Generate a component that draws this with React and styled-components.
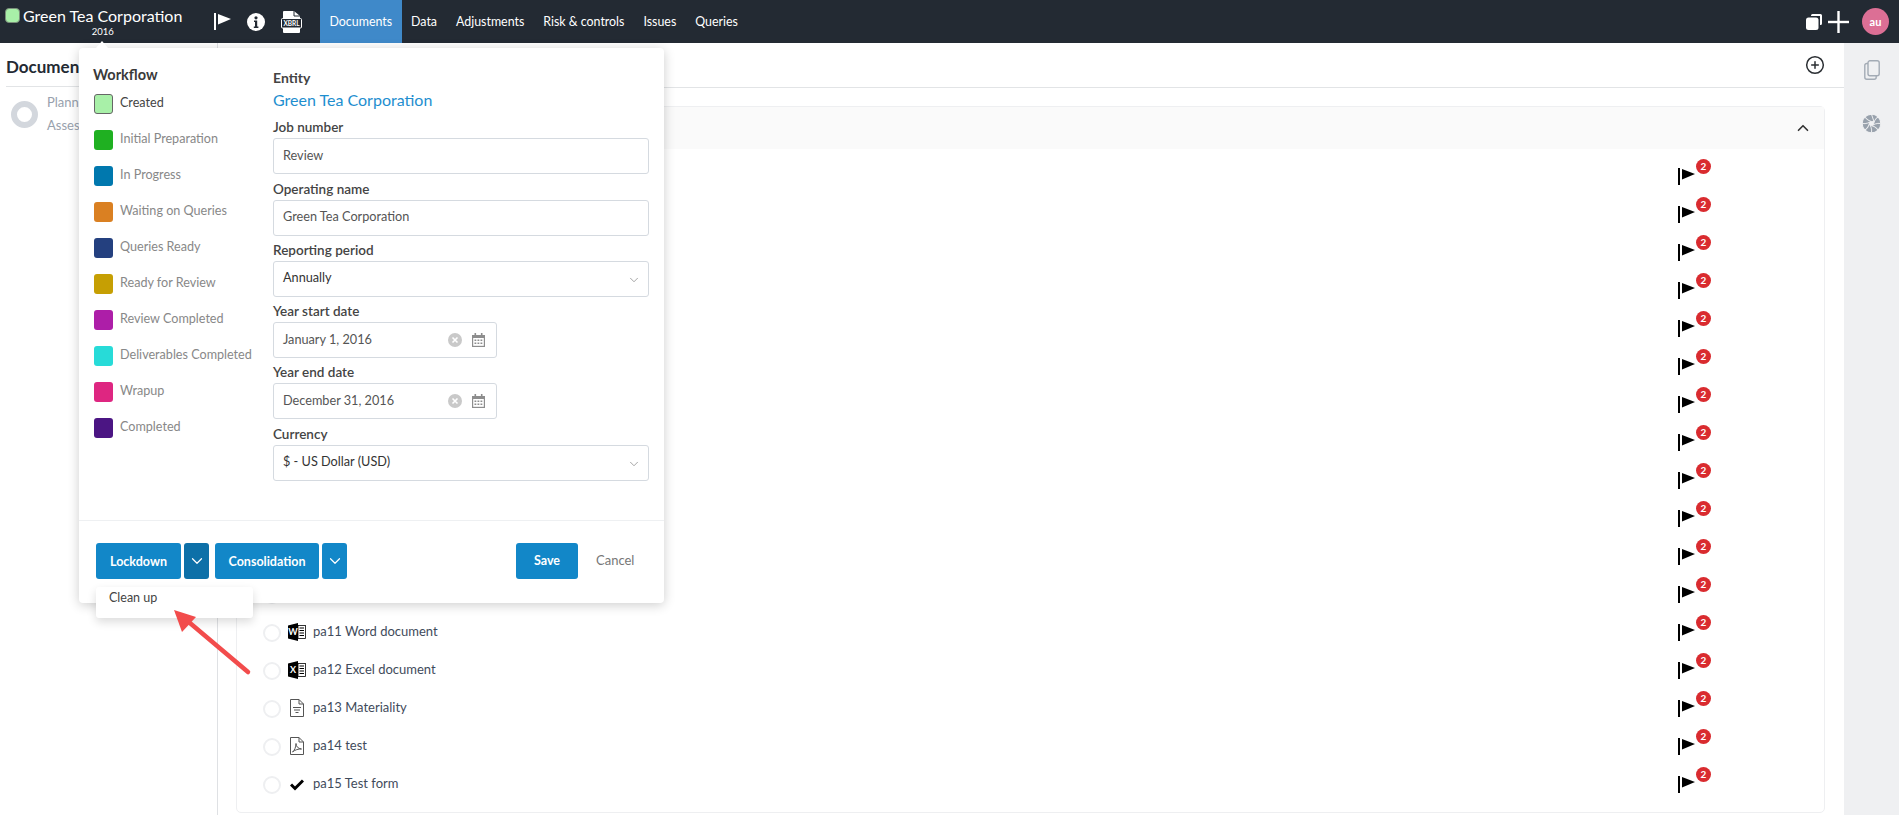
import React from 'react';
import styled, { createGlobalStyle } from 'styled-components';
import { CirclePlus, ChevronUp, ChevronDown } from 'lucide-react';

const GlobalStyle = createGlobalStyle`
    * { box-sizing: border-box; }
    html, body { margin: 0; padding: 0; height: 100%; }
    body {
        font-family: Lato, "Open Sans", sans-serif;
        background: #fff;
        color: #333;
        overflow: hidden;
    }
`;

const navItems = ['Documents', 'Data', 'Adjustments', 'Risk & controls', 'Issues', 'Queries'];

const statuses = [
    { name: 'Created', color: '#a8f0a8', active: true },
    { name: 'Initial Preparation', color: '#1fb021' },
    { name: 'In Progress', color: '#0078ae' },
    { name: 'Waiting on Queries', color: '#da8022' },
    { name: 'Queries Ready', color: '#24407f' },
    { name: 'Ready for Review', color: '#c69f03' },
    { name: 'Review Completed', color: '#ad1ea8' },
    { name: 'Deliverables Completed', color: '#27dbd8' },
    { name: 'Wrapup', color: '#de2681' },
    { name: 'Completed', color: '#4b1583' },
];

// the first rows sit behind the popup, only their flags show
const documents = [
    ...Array.from({ length: 12 }, () => ({})),
    { name: 'pa11 Word document', kind: 'word' },
    { name: 'pa12 Excel document', kind: 'excel' },
    { name: 'pa13 Materiality', kind: 'sheet' },
    { name: 'pa14 test', kind: 'pdf' },
    { name: 'pa15 Test form', kind: 'form' },
];

const FlagIcon = ({ color = '#000' }) => (
    <svg width="17" height="17" viewBox="0 0 17 17">
        <rect x="0" y="0" width="2" height="17" fill={color} />
        <path d="M4 1 L17 6 L4 11.5 Z" fill={color} />
    </svg>
);

const InfoIcon = () => (
    <svg width="18" height="18" viewBox="0 0 18 18">
        <circle cx="9" cy="9" r="9" fill="#fff" />
        <circle cx="9" cy="4.8" r="1.6" fill="#232a33" />
        <path d="M7 7.5h3.2v6h1.2v1.4H6.8v-1.4H8v-4.6H7z" fill="#232a33" />
    </svg>
);

const XbrlIcon = () => (
    <svg width="21" height="22" viewBox="0 0 21 22">
        <path d="M2 1a1 1 0 0 1 1-1h10l6 5v16a1 1 0 0 1-1 1H3a1 1 0 0 1-1-1z" fill="#fff" />
        <path d="M13 0v5h6" fill="none" stroke="#232a33" strokeWidth="1" />
        <rect x="0.5" y="7.500" width="20" height="9.500" rx="1" fill="#232a33" stroke="#fff" strokeWidth="1" />
        <text x="10.5" y="15" textAnchor="middle" fontSize="6.500" fontWeight="700" fontFamily="Lato, sans-serif" fill="#fff">XBRL</text>
    </svg>
);

const WindowsIcon = () => (
    <svg width="16" height="16" viewBox="0 0 16 16">
        <path d="M5 1.5A1.5 1.5 0 0 1 6.5 0h8A1.5 1.5 0 0 1 16 1.5v8a1.5 1.5 0 0 1-1.5 1.5H14V2H5z" fill="#fff" />
        <rect x="0" y="3.5" width="12.5" height="12.5" rx="2.5" fill="#fff" />
    </svg>
);

const ThinPlus = () => (
    <svg width="21" height="22" viewBox="0 0 21 22">
        <rect x="9.3" y="0" width="2.4" height="22" fill="#fff" />
        <rect x="0" y="9.8" width="21" height="2.4" fill="#fff" />
    </svg>
);

const CopyIcon = () => (
    <svg width="16" height="20" viewBox="0 0 16 20" fill="none" stroke="#a3abb5" strokeWidth="1.4">
        <rect x="4" y="0.8" width="11.2" height="15" rx="2" />
        <path d="M4 3.5H2.8a2 2 0 0 0-2 2v11.7a2 2 0 0 0 2 2h7.4a2 2 0 0 0 2-2V15.800" />
    </svg>
);

const ApertureIcon = () => (
    <svg width="19" height="19" viewBox="-10 -10 20 20">
        {[0, 45, 90, 135, 180, 225, 270, 315].map((angle) => (
            <path
                key={angle}
                d="M0 -9.800 A9.800 9.800 0 0 1 6.900 -6.900 C5.800 -4.800 4.600 -2 3.200 0.500 C1 -2 -0.800 -5.500 0 -9.800 Z"
                fill="#98a1ac"
                stroke="#eff0f2"
                strokeWidth="1"
                transform={`rotate(${angle})`}
            />
        ))}
    </svg>
);

const OfficeIcon = ({ letter }) => (
    <svg width="18" height="18" viewBox="0 0 18 18">
        <path d="M0 2.500 L10 0 V18 L0 15.500 Z" fill="#000" />
        <rect x="10" y="2.500" width="7.400" height="13" fill="#fff" stroke="#000" strokeWidth="0.8" />
        {[4.500, 7, 9.500, 12].map((y) => (
            <rect key={y} x="11.500" y={y} width="4.500" height="1" fill="#000" />
        ))}
        <text x="5" y="12" textAnchor="middle" fontSize="9" fontWeight="700" fontFamily="Lato, sans-serif" fill="#fff">{letter}</text>
    </svg>
);

const SheetIcon = () => (
    <svg width="14" height="18" viewBox="0 0 14 18" fill="none" stroke="#555" strokeWidth="1">
        <path d="M0.500 0.500h8.500l4.500 4.500v12.500h-13z" />
        <path d="M9 0.500v4.500h4.500" />
        <path d="M3 8.500h8M4 11h6M5.500 13.500h3" />
    </svg>
);

const PdfIcon = () => (
    <svg width="14" height="18" viewBox="0 0 14 18" fill="none" stroke="#555" strokeWidth="1">
        <path d="M0.500 0.500h8.500l4.500 4.500v12.500h-13z" />
        <path d="M9 0.500v4.500h4.500" />
        <path d="M2.500 15c2-1.500 3.500-5 3.500-8.500 0 3 2 5 5.500 5.500-3-0.200-6.500 0.800-9 3z" />
    </svg>
);

const CheckIcon = () => (
    <svg width="14" height="18" viewBox="0 0 14 18">
        <path d="M1 9.500 L5 13.500 L13 5.500" fill="none" stroke="#000" strokeWidth="3" />
    </svg>
);

const DocIcon = ({ kind }) => {
    if (kind === 'word') return <OfficeIcon letter="W" />;
    if (kind === 'excel') return <OfficeIcon letter="X" />;
    if (kind === 'sheet') return <SheetIcon />;
    if (kind === 'pdf') return <PdfIcon />;
    if (kind === 'form') return <CheckIcon />;
    return null;
};

const ClearIcon = () => (
    <svg width="14" height="14" viewBox="0 0 14 14">
        <circle cx="7" cy="7" r="7" fill="#c9c9c9" />
        <path d="M4.500 4.500l5 5M9.500 4.500l-5 5" stroke="#fff" strokeWidth="1.600" />
    </svg>
);

const CalendarIcon = () => (
    <svg width="13" height="14" viewBox="0 0 13 14">
        <rect x="2.500" y="0" width="1.600" height="3" fill="#8d8d8d" />
        <rect x="8.900" y="0" width="1.600" height="3" fill="#8d8d8d" />
        <path d="M0 2h13v12H0z" fill="#8d8d8d" />
        <rect x="1.200" y="5" width="10.600" height="7.800" fill="#fff" />
        {[2.500, 5.500, 8.500].map((x) => (
            <React.Fragment key={x}>
                <rect x={x} y="6.500" width="1.800" height="1.500" fill="#8d8d8d" />
                <rect x={x} y="9.500" width="1.800" height="1.500" fill="#8d8d8d" />
            </React.Fragment>
        ))}
    </svg>
);

const Field = ({ label, value, kind }) => (
    <FieldRow>
        <FieldLabel>{label}</FieldLabel>
        <InputBox $short={kind === 'date'} $dark={kind === 'select'}>
            <span>{value}</span>
            {kind === 'select' && <SelectCaret><ChevronDown size={14} strokeWidth={1.3} /></SelectCaret>}
            {kind === 'date' && <DateIcons><ClearIcon /><CalendarIcon /></DateIcons>}
        </InputBox>
    </FieldRow>
);

const App = () => {
    return (
        <>
            <GlobalStyle />
            <Page>
                <Header>
                    <Brand>
                        <BrandSquare />
                        <BrandText>
                            <BrandName>Green Tea Corporation</BrandName>
                            <BrandYear>2016</BrandYear>
                        </BrandText>
                    </Brand>
                    <HeaderIcons>
                        <FlagIcon color="#fff" />
                        <InfoIcon />
                        <XbrlIcon />
                    </HeaderIcons>
                    <Nav>
                        {navItems.map((item, i) => (
                            <NavItem key={item} $active={i === 0}>{item}</NavItem>
                        ))}
                    </Nav>
                    <HeaderRight>
                        <WindowsIcon />
                        <ThinPlus />
                        <Avatar>au</Avatar>
                    </HeaderRight>
                </Header>
                <Body>
                    <LeftPanel>
                        <LeftTitle>Documents</LeftTitle>
                        <Stage>
                            <Ring />
                            <StageText>
                                <span>Planning</span>
                                <span>Assessment</span>
                            </StageText>
                        </Stage>
                    </LeftPanel>
                    <Main>
                        <Toolbar>
                            <CirclePlus size={20} strokeWidth={1.8} color="#2b2f33" />
                        </Toolbar>
                        <Card>
                            <CardHeader>
                                <ChevronUp size={18} strokeWidth={2.2} color="#333" />
                            </CardHeader>
                            <DocList>
                                {documents.map((doc, i) => (
                                    <DocRow key={i}>
                                        <Radio />
                                        <DocIconSlot><DocIcon kind={doc.kind} /></DocIconSlot>
                                        <DocName>{doc.name}</DocName>
                                        <FlagWrap>
                                            <FlagIcon />
                                            <Badge>2</Badge>
                                        </FlagWrap>
                                    </DocRow>
                                ))}
                            </DocList>
                        </Card>
                    </Main>
                    <RightRail>
                        <CopyIcon />
                        <ApertureIcon />
                    </RightRail>
                </Body>

                <Popup>
                    <PopupArrow />
                    <PopupBody>
                        <Workflow>
                            <WorkflowTitle>Workflow</WorkflowTitle>
                            {statuses.map((s) => (
                                <Status key={s.name}>
                                    <Swatch $color={s.color} $active={s.active} />
                                    <StatusName $active={s.active}>{s.name}</StatusName>
                                </Status>
                            ))}
                        </Workflow>
                        <Form>
                            <EntityLabel>Entity</EntityLabel>
                            <EntityName>Green Tea Corporation</EntityName>
                            <Field label="Job number" value="Review" />
                            <Field label="Operating name" value="Green Tea Corporation" />
                            <Field label="Reporting period" value="Annually" kind="select" />
                            <Field label="Year start date" value="January 1, 2016" kind="date" />
                            <Field label="Year end date" value="December 31, 2016" kind="date" />
                            <Field label="Currency" value="$ - US Dollar (USD)" kind="select" />
                        </Form>
                    </PopupBody>
                    <PopupFooter>
                        <SplitButton $width={85}>Lockdown</SplitButton>
                        <CaretButton $dark><ChevronDown size={18} strokeWidth={1.6} /></CaretButton>
                        <SplitButton $width={104} $gap>Consolidation</SplitButton>
                        <CaretButton><ChevronDown size={18} strokeWidth={1.6} /></CaretButton>
                        <SaveButton>Save</SaveButton>
                        <CancelButton>Cancel</CancelButton>
                        <Dropdown>Clean up</Dropdown>
                    </PopupFooter>
                </Popup>

                <Annotation width="90" height="76" viewBox="0 0 90 76">
                    <path d="M78 67 L14 13" stroke="#f24c4c" strokeWidth="4.500" strokeLinecap="round" />
                    <path d="M4 5 L26 12 L12 27 Z" fill="#f24c4c" />
                </Annotation>
            </Page>
        </>
    );
};

const Page = styled.div`
    position: relative;
    width: 1899px;
    height: 815px;
    overflow: hidden;
    display: flex;
    flex-direction: column;
`;

const Header = styled.header`
    height: 43px;
    flex: none;
    display: flex;
    align-items: stretch;
    background: #232a33;
    color: #fff;
    padding-left: 5px;
`;

const Brand = styled.div`
    display: flex;
    align-items: flex-start;
    width: 179px;
`;

const BrandSquare = styled.div`
    width: 15px;
    height: 15px;
    margin-top: 8px;
    border-radius: 4px;
    background: #a8f0a8;
    border: 1px solid #7b8f7b;
`;

const BrandText = styled.div`
    margin-left: 3px;
    display: flex;
    flex-direction: column;
    align-items: center;
`;

const BrandName = styled.div`
    font-size: 16px;
    line-height: 20px;
    margin-top: 6px;
    white-space: nowrap;
`;

const BrandYear = styled.div`
    font-size: 9.500px;
    line-height: 11px;
`;

const HeaderIcons = styled.div`
    display: flex;
    align-items: center;
    gap: 16px;
    margin-left: 30px;
    width: 106px;
`;

const Nav = styled.nav`
    display: flex;
`;

const NavItem = styled.div`
    display: flex;
    align-items: center;
    padding: 0 9.500px;
    font-size: 12.400px;
    background: ${(p) => (p.$active ? '#3f89c9' : 'transparent')};
`;

const HeaderRight = styled.div`
    margin-left: auto;
    display: flex;
    align-items: center;
    padding-right: 10px;
    gap: 6px;
`;

const Avatar = styled.div`
    width: 27px;
    height: 27px;
    margin-left: 7px;
    border-radius: 50%;
    background: #dc6f95;
    font-size: 11px;
    font-weight: 700;
    display: flex;
    align-items: center;
    justify-content: center;
`;

const Body = styled.div`
    flex: 1;
    display: flex;
    min-height: 0;
`;

const LeftPanel = styled.aside`
    width: 218px;
    flex: none;
    border-right: 1px solid #dfe1e4;
    padding-left: 6px;
`;

const LeftTitle = styled.div`
    height: 44px;
    padding-top: 13px;
    font-size: 17px;
    font-weight: 700;
    color: #232a33;
    border-bottom: 1px solid #e2e4e6;
`;

const Stage = styled.div`
    display: flex;
    padding: 14px 0 0 5px;
    gap: 9px;
`;

const Ring = styled.div`
    width: 27px;
    height: 27px;
    border-radius: 50%;
    border: 6px solid #d3d7dd;
`;

const StageText = styled.div`
    display: flex;
    flex-direction: column;
    margin-top: -10px;
    font-size: 13px;
    line-height: 23px;
    color: #98a1ad;
`;

const Main = styled.main`
    flex: 1;
    display: flex;
    flex-direction: column;
    min-width: 0;
`;

const Toolbar = styled.div`
    height: 45px;
    flex: none;
    display: flex;
    align-items: center;
    justify-content: flex-end;
    padding-right: 19px;
    border-bottom: 1px solid #e2e4e6;
`;

const Card = styled.section`
    margin: 18px 19px 2px 18px;
    flex: 1;
    border: 1px solid #eeeff1;
    border-radius: 5px;
    display: flex;
    flex-direction: column;
`;

const CardHeader = styled.div`
    height: 42px;
    flex: none;
    background: #fafafa;
    display: flex;
    align-items: center;
    justify-content: flex-end;
    padding-right: 12px;
`;

const DocList = styled.div`
    padding-top: 8px;
`;

const DocRow = styled.div`
    height: 38px;
    display: flex;
    align-items: center;
    padding-left: 26px;
`;

const Radio = styled.div`
    width: 18px;
    height: 18px;
    border-radius: 50%;
    border: 2px solid #eeeff1;
    margin-top: 2px;
`;

const DocIconSlot = styled.div`
    width: 18px;
    height: 18px;
    margin-left: 7px;
    display: flex;
    align-items: center;
    justify-content: center;
`;

const DocName = styled.div`
    margin-left: 7px;
    margin-bottom: 2px;
    font-size: 13px;
    color: #3f4b5b;
`;

const FlagWrap = styled.div`
    position: relative;
    margin-left: auto;
    margin-right: 129px;
    height: 17px;
    width: 17px;
`;

const Badge = styled.span`
    position: absolute;
    left: 18px;
    top: -9px;
    width: 15px;
    height: 15px;
    border-radius: 50%;
    background: #d92b2f;
    color: #fff;
    font-size: 10px;
    font-weight: 700;
    line-height: 14px;
    text-align: center;
`;

const RightRail = styled.aside`
    width: 55px;
    flex: none;
    background: #eff0f2;
    display: flex;
    flex-direction: column;
    align-items: center;
    padding-top: 17px;
    gap: 34px;
`;

const Popup = styled.div`
    position: absolute;
    left: 79px;
    top: 48px;
    width: 585px;
    height: 555px;
    background: #fff;
    border-radius: 4px;
    box-shadow: 0 2px 12px rgba(0, 0, 0, 0.2);
    display: flex;
    flex-direction: column;
`;

const PopupArrow = styled.div`
    position: absolute;
    left: 17px;
    top: -7px;
    width: 0;
    height: 0;
    border-left: 6px solid transparent;
    border-right: 6px solid transparent;
    border-bottom: 7px solid #fff;
`;

const PopupBody = styled.div`
    flex: 1;
    display: flex;
    padding: 18px 15px 0;
`;

const Workflow = styled.div`
    width: 179px;
    flex: none;
`;

const WorkflowTitle = styled.div`
    font-size: 14.500px;
    font-weight: 700;
    line-height: 18px;
    margin-left: -1px;
    color: #3a3a3a;
    margin-bottom: 10px;
`;

const Status = styled.div`
    height: 36px;
    display: flex;
    align-items: flex-start;
`;

const Swatch = styled.div`
    width: 19px;
    height: 20px;
    border-radius: 3px;
    background: ${(p) => p.$color};
    border: ${(p) => (p.$active ? '1px solid #666' : 'none')};
`;

const StatusName = styled.div`
    margin-left: 7px;
    font-size: 12.600px;
    line-height: 17px;
    color: ${(p) => (p.$active ? '#444' : '#888')};
    white-space: nowrap;
`;

const Form = styled.div`
    flex: 1;
    min-width: 0;
`;

const EntityLabel = styled.div`
    font-size: 14px;
    font-weight: 700;
    line-height: 18px;
    margin-top: 3px;
    color: #444;
`;

const EntityName = styled.div`
    font-size: 16px;
    line-height: 22px;
    margin: 2px 0;
    color: #1e8ecf;
`;

const FieldRow = styled.div`
    height: 61.250px;
    display: flex;
    flex-direction: column;
    justify-content: flex-end;
`;

const FieldLabel = styled.div`
    font-size: 13.500px;
    font-weight: 600;
    line-height: 18px;
    height: 25px;
    padding-top: 5px;
    color: #444;
`;

const InputBox = styled.div`
    position: relative;
    display: flex;
    align-items: center;
    height: 36px;
    width: ${(p) => (p.$short ? '224px' : '100%')};
    padding: 0 9px 3px;
    border: 1px solid #d5dae0;
    border-radius: 3px;
    font-size: 12.700px;
    color: ${(p) => (p.$dark ? '#333' : '#555')};
`;

const SelectCaret = styled.span`
    margin-left: auto;
    margin-right: -2px;
    margin-top: 5px;
    color: #888;
    display: flex;
`;

const DateIcons = styled.span`
    margin-left: auto;
    margin-right: 2px;
    margin-top: 3px;
    display: flex;
    gap: 10px;
`;

const PopupFooter = styled.div`
    position: relative;
    height: 83px;
    flex: none;
    border-top: 1px solid #eef0f2;
    display: flex;
    align-items: flex-start;
    padding: 22px 0 0 17px;
`;

const ButtonBase = styled.div`
    height: 36px;
    display: flex;
    align-items: center;
    justify-content: center;
    background: #1287c8;
    color: #fff;
    border-radius: 3px;
    font-size: 12.500px;
    font-weight: 700;
`;

const SplitButton = styled(ButtonBase)`
    width: ${(p) => p.$width}px;
    margin-left: ${(p) => (p.$gap ? '6px' : '0')};
`;

const CaretButton = styled(ButtonBase)`
    width: 25px;
    margin-left: 3px;
    background: ${(p) => (p.$dark ? '#0d70a8' : '#1287c8')};
`;

const SaveButton = styled(ButtonBase)`
    width: 62px;
    margin-left: 169px;
    padding-bottom: 2px;
`;

const CancelButton = styled.div`
    height: 34px;
    display: flex;
    align-items: center;
    margin-left: 18px;
    font-size: 13px;
    color: #777;
`;

const Dropdown = styled.div`
    position: absolute;
    left: 17px;
    top: 66px;
    width: 157px;
    height: 31px;
    padding: 2px 0 0 13px;
    background: #fff;
    border-radius: 3px;
    box-shadow: 0 4px 10px rgba(0, 0, 0, 0.14);
    font-size: 12.500px;
    line-height: 18px;
    color: #444;
`;

const Annotation = styled.svg`
    position: absolute;
    left: 170px;
    top: 605px;
`;

export default App;
